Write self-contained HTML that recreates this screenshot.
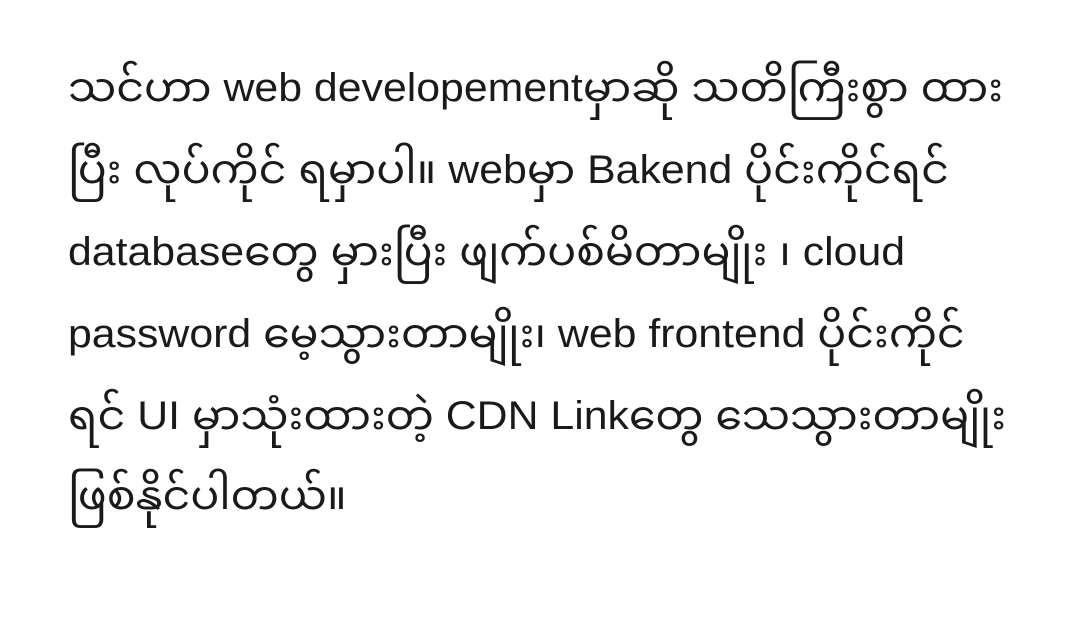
<!DOCTYPE html>
<html><head><meta charset="utf-8">
<style>
html,body{margin:0;padding:0;background:#fff;}
body{width:1080px;height:632px;overflow:hidden;position:relative;font-family:"Liberation Sans","Noto Sans Myanmar","Padauk","Myanmar Text",sans-serif;color:#1a1a1a;}
.l{position:absolute;left:68px;font-size:40px;white-space:nowrap;line-height:44px;transform:scaleX(1.07);transform-origin:0 0;}
</style></head><body>
<div class="l" style="top:66px">သင်ဟာ web developementမှာဆို သတိကြီးစွာ ထား</div>
<div class="l" style="top:148px">ပြီး လုပ်ကိုင် ရမှာပါ။ webမှာ Bakend ပိုင်းကိုင်ရင်</div>
<div class="l" style="top:230px">databaseတွေ မှားပြီး ဖျက်ပစ်မိတာမျိုး ၊ cloud</div>
<div class="l" style="top:312px">password မေ့သွားတာမျိုး၊ web frontend ပိုင်းကိုင်</div>
<div class="l" style="top:394px">ရင် UI မှာသုံးထားတဲ့ CDN Linkတွေ သေသွားတာမျိုး</div>
<div class="l" style="top:474px">ဖြစ်နိုင်ပါတယ်။</div>
</body></html>
